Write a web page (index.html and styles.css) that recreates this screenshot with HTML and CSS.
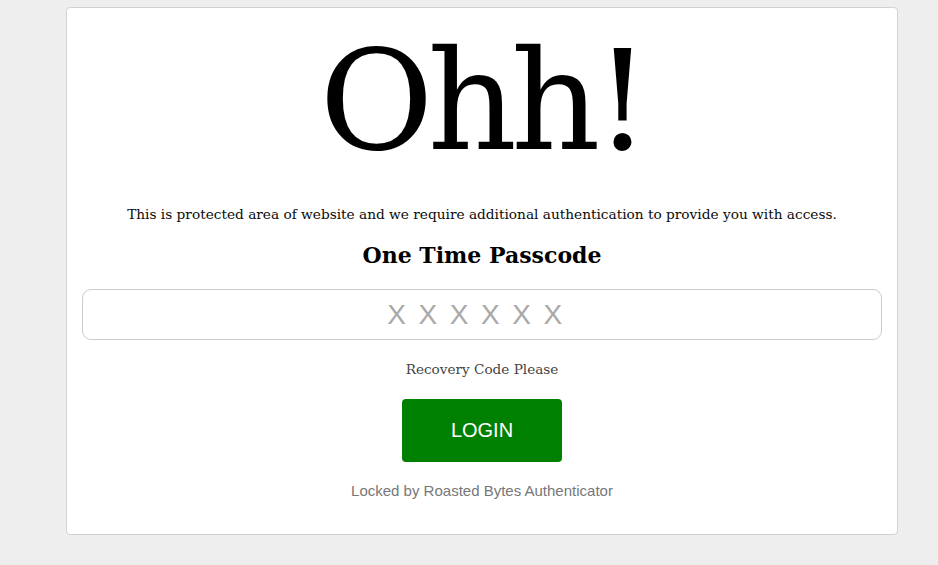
FILE: index.html
```html
<!DOCTYPE html>
<html lang="en">
<head>
<meta charset="utf-8">
<title>Protected Area</title>
<link rel="stylesheet" href="styles.css">
</head>
<body>
<main class="card">
  <h1 class="title">Ohh!</h1>
  <p class="lead">This is protected area of website and we require additional authentication to provide you with access.</p>
  <h2 class="subtitle">One Time Passcode</h2>
  <form class="form">
    <input class="otp" type="text" placeholder="X X X X X X">
    <p class="recovery">Recovery Code Please</p>
    <button class="login" type="button">LOGIN</button>
    <p class="footer">Locked by Roasted Bytes Authenticator</p>
  </form>
</main>
</body>
</html>
```
FILE: styles.css
```css
html, body {
  margin: 0;
  padding: 0;
  background: #eeeeee;
}
body {
  padding-top: 7px;
  height: 565px;
  box-sizing: border-box;
}
.card {
  margin-left: 66px;
  width: 832px;
  height: 528px;
  box-sizing: border-box;
  background: #fff;
  border: 1px solid #d2d2d2;
  border-radius: 4px;
  text-align: center;
  font-family: "DejaVu Serif", "Liberation Serif", serif;
  color: #000;
  padding: 0 15px;
}
.title {
  margin: 0;
  padding-top: 10px;
  height: 166px;
  font-size: 139px;
  line-height: 166px;
  font-weight: normal;
  letter-spacing: -6px;
}
.lead {
  margin: 20px 0 0;
  font-size: 13.7px;
  line-height: 20px;
  color: #0a0a0a;
}
.subtitle {
  margin: 16px 0 0;
  font-size: 22px;
  line-height: 30px;
  font-weight: bold;
}
.form {
  margin-top: 19px;
  display: flex;
  flex-direction: column;
  align-items: center;
}
.otp {
  width: 100%;
  height: 51px;
  box-sizing: border-box;
  border: 1px solid #cccccc;
  border-radius: 9px;
  text-align: center;
  font-family: "Liberation Sans", Arial, sans-serif;
  font-size: 28px;
  letter-spacing: 2.4px;
  outline: none;
  padding: 0 12px 0 0;
}
.otp::placeholder {
  color: #a9a9a9;
}
.recovery {
  margin: 19px 0 0;
  font-size: 13.6px;
  line-height: 20px;
  color: #444;
}
.login {
  margin-top: 20px;
  width: 160px;
  height: 63px;
  border: none;
  border-radius: 4px;
  background: #008000;
  color: #fff;
  font-family: "Liberation Sans", Arial, sans-serif;
  font-size: 20px;
  cursor: pointer;
}
.footer {
  margin: 19px 0 0;
  font-family: "Liberation Sans", Arial, sans-serif;
  font-size: 15px;
  line-height: 20px;
  color: #777;
}
```
